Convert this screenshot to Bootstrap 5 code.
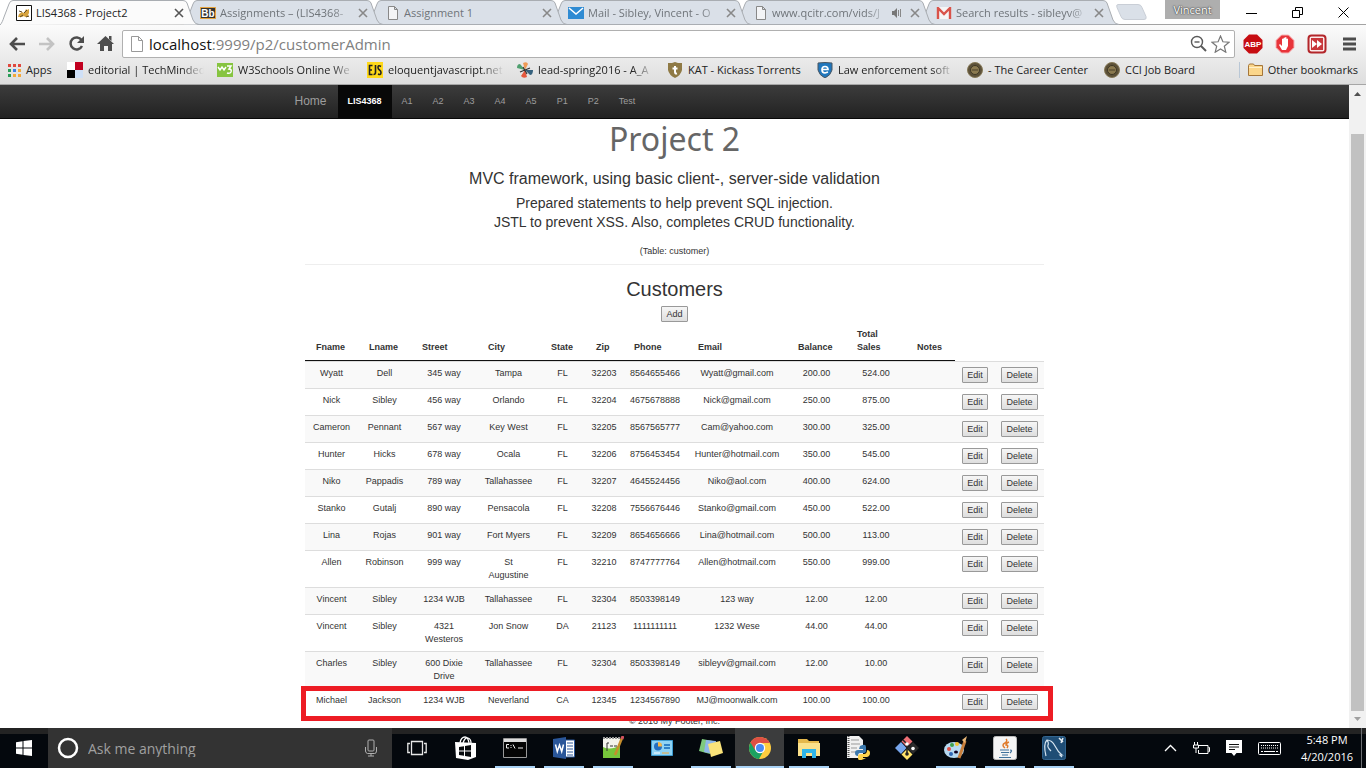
<!DOCTYPE html>
<html lang="en">
<head>
<meta charset="utf-8">
<meta name="viewport" content="width=device-width, initial-scale=1">
<title>LIS4368 - Project2</title>
<link href="https://cdn.jsdelivr.net/npm/bootstrap@5.3.0/dist/css/bootstrap.min.css" rel="stylesheet">
<style>
  body { font-family: "Open Sans", "Noto Sans", sans-serif; font-size: 11px; line-height: 16px; color: #333; background: #fff; overflow: hidden; }
  svg { display: block; flex: none; }
  button.bare { border: 0; background: none; padding: 0; color: inherit; }

  /* tab strip */
  .tabstrip { height: 25px; background: #fff; border-bottom: 1px solid #a3a3a3; }
  .tab-item { width: 184px; height: 24px; padding: 3px 0 0 16px; color: #6f7479; text-decoration: none; }
  .tab-item .shape { position: absolute; left: 0; top: 0; width: 199px; height: 25px; fill: #dae0e8; stroke: #a9adb2; }
  .tab-item.current { color: #222; }
  .tab-item.current .shape { fill: #fbfbfb; }
  .tab-body { gap: 4px; height: 20px; z-index: 1; }
  .tab-label { flex: 1; min-width: 0; }
  .fade-end { overflow: hidden; white-space: nowrap; }
  .fade-end.long { -webkit-mask-image: linear-gradient(90deg, #000 calc(100% - 22px), transparent); mask-image: linear-gradient(90deg, #000 calc(100% - 22px), transparent); }
  .user-tag { background: #aeaeae; color: #fff; width: 55px; height: 19px; text-shadow: 0 0 2px #333, 0 0 1px #333; }
  .win-buttons { width: 138px; color: #000; }

  /* toolbar and bookmarks */
  .toolbar-area { background: linear-gradient(#fbfbfb, #dedede); border-bottom: 1px solid #a6a6a6; height: 60px; }
  .toolrow { height: 34px; padding: 3px 10px 0 8px; }
  .address { border: 1px solid #b0b0b0; border-radius: 2px; background: #fff; height: 28px; padding: 0 4px 0 6px; }
  .address input { border: 0; outline: 0; background: none; font-size: 15px; color: transparent; padding: 0; position: absolute; inset: 0; width: 100%; }
  .address .url { font-size: 15px; line-height: 24px; color: #808080; }
  .address .url b { font-weight: 400; color: #111; }
  .bookmarks { height: 25px; gap: 13px; padding: 0 8px 3px; color: #222; }
  .bookmarks a { color: #222; text-decoration: none; gap: 5px; white-space: nowrap; }
  .bookmarks .fade-end { width: 116px; }
  .bookmarks .apps-label { width: 28px; }
  .bookmarks .career-label { width: 103px; }
  .other-marks { border-left: 1px solid #b9c7d6; padding-left: 8px; }

  /* the page itself */
  .page { font-family: "Liberation Sans", Arial, sans-serif; font-size: 9px; line-height: 13px; }
  .topnav { height: 34px; background: linear-gradient(#3c3c3c, #222); border-bottom: 1px solid #080808; }
  .topnav .inner { width: 760px; }
  .topnav a { color: #9d9d9d; text-decoration: none; padding: 0 10px; line-height: 33px; }
  .topnav a.home { font-size: 12px; padding: 0 11px 0 0; }
  .topnav a.on { background: #080808; color: #fff; font-weight: 700; }
  .sheet { width: 739px; }
  h1 { font-family: "Noto Sans", "Open Sans", sans-serif; font-size: 32px; line-height: 34px; font-weight: 400; color: #666; margin: 3px 0 14px; }
  h4 { font-size: 16px; line-height: 18px; font-weight: 400; margin: 0 0 6px; }
  .note { font-size: 14px; line-height: 19px; margin: 0 0 13px; }
  hr { margin: 6px 0 13px; border-top: 1px solid #eee; opacity: 1; }
  h3 { font-size: 20px; line-height: 22px; font-weight: 400; margin: 0 0 6px; }
  .btn-sys { border: 1px solid #999; border-radius: 1px; background: linear-gradient(#f6f6f6, #dedede); color: #333; font-size: 9px; line-height: 12px; height: 16px; padding: 1px 4px; display: block; margin: 0 auto; }
  .customers { width: 100%; table-layout: fixed; border-collapse: separate; border-spacing: 0; margin-top: 5px; }
  .customers th { padding: 1px 0 6px 11px; text-align: left; vertical-align: bottom; border-bottom: 1px solid #111; }
  .customers th.plain { border-color: transparent; }
  .customers td { padding: 5px; border-top: 1px solid #ddd; vertical-align: top; text-align: center; }
  .customers tbody tr:nth-child(odd) td { background: #f9f9f9; }
  .marker { position: absolute; left: -4px; right: -9px; bottom: -6px; height: 35px; border: 5px solid #ed1c24; z-index: 2; }

  .scroller { width: 17px; background: #f1f1f1; }
  .scroller .thumb { background: #c1c1c1; margin: 0 2px; }

  /* taskbar */
  .taskbar { height: 40px; background: linear-gradient(#232323 6px, #04080d 6px); color: #fff; }
  .start { width: 48px; }
  .search { width: 344px; background: #333; padding: 0 13px 0 9px; gap: 9px; }
  .search input { border: 0; outline: 0; background: none; flex: 1; min-width: 0; font-size: 14px; color: #a0a0a0; padding: 2px 0 0; }
  .search input::placeholder { color: #a0a0a0; opacity: 1; }
  .app { width: 49px; }
  .app.run { background: linear-gradient(#a9d2f5, #a9d2f5) center bottom / 40px 2px no-repeat; }
  .app.front { background: linear-gradient(#a9d2f5, #a9d2f5) center bottom / 48px 2px no-repeat, #3b3c3d; }
  .clock { line-height: 17px; width: 60px; }
  .peek { width: 5px; border-left: 1px solid #6b6e72; }
</style>
</head>
<body class="d-flex flex-column vh-100">

<header>
  <nav class="tabstrip d-flex" aria-label="Tabs">
    <a href="#" class="tab-item current position-relative" style="z-index:7">
      <svg class="shape" viewBox="0 0 199 25"><path d="M0 25C2 23 3 20 4 17L9 4Q10 .5 13 .5H183Q186 .5 187 3L193 20Q195 24.500 199 24.500" /></svg>
      <span class="tab-body d-flex align-items-center position-relative">
        <svg width="16" height="16" viewBox="0 0 16 16"><path d="M.5.500h15v15H.500z" fill="#fff" stroke="#111"/><path d="M2 12l1-3 3-2 2 1 2-4 1 1 2-1v4l-1 2 1 2H9l-1-1-2 1z" fill="#d6a23d"/><path d="M3 6l3 1M8 8l3-3M4 12l3-2M10 12l3-1" stroke="#5d4a26"/></svg>
        <span class="tab-label fade-end">LIS4368 - Project2</span>
        <svg width="10" height="10" viewBox="0 0 10 10" stroke="#555" stroke-width="1.600"><path d="M1 1l8 8M9 1l-8 8"/></svg>
      </span>
    </a>
    <a href="#" class="tab-item position-relative" style="z-index:6">
      <svg class="shape" viewBox="0 0 199 25"><path d="M0 24.500C2 23 3 20 4 17L9 4Q10 .5 13 .5H183Q186 .5 187 3L193 20Q195 24.500 199 24.500z" /></svg>
      <span class="tab-body d-flex align-items-center position-relative">
        <svg width="16" height="12" viewBox="0 0 16 12"><path d="M.5.500h15v11H.500z" fill="#333" stroke="#e5a23c"/><text x="8" y="9.500" font-size="10" font-weight="700" text-anchor="middle" fill="#fff" font-family="Liberation Sans">Bb</text></svg>
        <span class="tab-label fade-end long">Assignments – (LIS4368-</span>
        <svg width="10" height="10" viewBox="0 0 10 10" stroke="#888" stroke-width="1.600"><path d="M1 1l8 8M9 1l-8 8"/></svg>
      </span>
    </a>
    <a href="#" class="tab-item position-relative" style="z-index:5">
      <svg class="shape" viewBox="0 0 199 25"><path d="M0 24.500C2 23 3 20 4 17L9 4Q10 .5 13 .5H183Q186 .5 187 3L193 20Q195 24.500 199 24.500z" /></svg>
      <span class="tab-body d-flex align-items-center position-relative">
        <svg width="16" height="16" viewBox="0 0 16 16" fill="#f3f4f6" stroke="#888"><path d="M4.500 1.500h6l3 3v10h-9zM10.500 1.500v3h3"/></svg>
        <span class="tab-label fade-end">Assignment 1</span>
        <svg width="10" height="10" viewBox="0 0 10 10" stroke="#888" stroke-width="1.600"><path d="M1 1l8 8M9 1l-8 8"/></svg>
      </span>
    </a>
    <a href="#" class="tab-item position-relative" style="z-index:4">
      <svg class="shape" viewBox="0 0 199 25"><path d="M0 24.500C2 23 3 20 4 17L9 4Q10 .5 13 .5H183Q186 .5 187 3L193 20Q195 24.500 199 24.500z" /></svg>
      <span class="tab-body d-flex align-items-center position-relative">
        <svg width="16" height="12" viewBox="0 0 16 12"><path d="M0 0h16v12H0z" fill="#2f8bd3"/><path d="M1 1l7 6 7-6" fill="none" stroke="#fff" stroke-width="1.500"/></svg>
        <span class="tab-label fade-end long">Mail - Sibley, Vincent - O</span>
        <svg width="10" height="10" viewBox="0 0 10 10" stroke="#888" stroke-width="1.600"><path d="M1 1l8 8M9 1l-8 8"/></svg>
      </span>
    </a>
    <a href="#" class="tab-item position-relative" style="z-index:3">
      <svg class="shape" viewBox="0 0 199 25"><path d="M0 24.500C2 23 3 20 4 17L9 4Q10 .5 13 .5H183Q186 .5 187 3L193 20Q195 24.500 199 24.500z" /></svg>
      <span class="tab-body d-flex align-items-center position-relative">
        <svg width="16" height="16" viewBox="0 0 16 16" fill="#f3f4f6" stroke="#888"><path d="M4.500 1.500h6l3 3v10h-9zM10.500 1.500v3h3"/></svg>
        <span class="tab-label fade-end long">www.qcitr.com/vids/J</span>
        <svg width="10" height="10" viewBox="0 0 10 10" fill="#777"><path d="M0 3h2l3-3v10L2 7H0z"/><path d="M6.500 2v6M8.500 1v8" stroke="#888"/></svg>
        <svg width="10" height="10" viewBox="0 0 10 10" stroke="#888" stroke-width="1.600" class="ms-1"><path d="M1 1l8 8M9 1l-8 8"/></svg>
      </span>
    </a>
    <a href="#" class="tab-item position-relative" style="z-index:2">
      <svg class="shape" viewBox="0 0 199 25"><path d="M0 24.500C2 23 3 20 4 17L9 4Q10 .5 13 .5H183Q186 .5 187 3L193 20Q195 24.500 199 24.500z" /></svg>
      <span class="tab-body d-flex align-items-center position-relative">
        <svg width="16" height="12" viewBox="0 0 16 12"><path d="M1 0h14v12H1z" fill="#f5f5f5"/><path d="M2 12V1l6 6 6-6v11" fill="none" stroke="#d9534a" stroke-width="2.400"/></svg>
        <span class="tab-label fade-end long">Search results - sibleyv@</span>
        <svg width="10" height="10" viewBox="0 0 10 10" stroke="#888" stroke-width="1.600"><path d="M1 1l8 8M9 1l-8 8"/></svg>
      </span>
    </a>
    <button class="bare ms-2" aria-label="New tab"><svg width="42" height="20" viewBox="0 0 42 20"><path d="M6 2.500h20q3 0 4 3l4 9q1 3-2 3H13q-3 0-4-3L5 5.500q-1-3 1-3z" fill="#dae0e8" stroke="#c9ced6"/></svg></button>
    <div class="user-tag ms-auto me-2 d-flex align-items-center justify-content-center">Vincent</div>
    <div class="win-buttons d-flex align-items-center justify-content-around">
      <button class="bare" aria-label="Minimize"><svg width="11" height="11" viewBox="0 0 11 11" stroke="#000"><path d="M0 6.500h11"/></svg></button>
      <button class="bare" aria-label="Restore"><svg width="11" height="11" viewBox="0 0 11 11" stroke="#000" fill="none"><path d="M.5 3.500h7v7h-7zM3.500 3V.500h7v7H8"/></svg></button>
      <button class="bare" aria-label="Close"><svg width="11" height="11" viewBox="0 0 11 11" stroke="#000"><path d="M.5.500l10 10M10.500.500l-10 10"/></svg></button>
    </div>
  </nav>

  <div class="toolbar-area">
    <div class="toolrow d-flex align-items-center">
      <button class="bare" aria-label="Back"><svg width="18" height="16" viewBox="0 0 18 16" fill="none" stroke="#4d4d4d" stroke-width="2.600"><path d="M17 8H4M9 2L3 8l6 6"/></svg></button>
      <button class="bare ms-2 ps-1" aria-label="Forward"><svg width="18" height="16" viewBox="0 0 18 16" fill="none" stroke="#c3c3c3" stroke-width="2.600"><path d="M1 8h13M9 2l6 6-6 6"/></svg></button>
      <button class="bare ms-2 ps-1" aria-label="Reload"><svg width="17" height="17" viewBox="0 0 17 17"><path d="M13.500 5A6 6 0 1 0 14 11" fill="none" stroke="#4d4d4d" stroke-width="2.500"/><path d="M16 1v7H9z" fill="#4d4d4d"/></svg></button>
      <button class="bare ms-2 ps-1" aria-label="Home"><svg width="17" height="17" viewBox="0 0 17 17" fill="#4d4d4d"><path d="M8.500 1L17 9h-2v7h-4v-5H7v5H3V9H0zM12 1h2.500v5L12 4z"/></svg></button>
      <div class="address d-flex align-items-center flex-grow-1 ms-2">
        <svg width="16" height="16" viewBox="0 0 16 16" fill="#fff" stroke="#999"><path d="M2.500.500h7l4 4v11h-11zM9.500.500v4h4"/></svg>
        <label class="position-relative flex-grow-1 ms-1"><span class="url"><b>localhost</b>:9999/p2/customerAdmin</span><input type="text" aria-label="Address"></label>
        <svg width="17" height="17" viewBox="0 0 17 17" fill="none" stroke="#5a5a5a" stroke-width="1.400"><circle cx="7" cy="7" r="5.500"/><path d="M4.500 7h5"/><path d="M11 11l5 5" stroke-width="2"/></svg>
        <svg class="ms-1" width="19" height="18" viewBox="0 0 19 18" fill="#fff" stroke="#777" stroke-width="1.200"><path d="M9.500 1l2.400 5.800 6.100.4-4.700 4 1.500 6-5.300-3.300-5.300 3.300 1.500-6-4.700-4 6.100-.4z"/></svg>
      </div>
      <button class="bare ms-2" aria-label="ABP"><svg width="20" height="20" viewBox="0 0 20 20"><path d="M6 .5h8L19.500 6v8L14 19.500H6L.5 14V6z" fill="#c70d12"/><text x="10" y="13" font-size="8" font-weight="700" text-anchor="middle" fill="#fff" font-family="Liberation Sans">ABP</text></svg></button>
      <button class="bare ms-2 ps-1" aria-label="AdBlock"><svg width="20" height="20" viewBox="0 0 20 20"><path d="M6.500 1h7L19 6.500v7L13.500 19h-7L1 13.500v-7z" fill="#e8343a" stroke="#f6b4b6"/><path d="M7 16l-3-5 1-1 2 2V5q1-1 1.500 0V4q1-1 1.500 0v-.5q1-1 1.500 0V5q1-1 1.500 0v7l-2 4z" fill="#fff"/></svg></button>
      <button class="bare ms-2 ps-1" aria-label="Skip"><svg width="20" height="20" viewBox="0 0 20 20"><rect x="1.500" y="1.500" width="17" height="17" rx="3" fill="#fbeaea" stroke="#b3262a" stroke-width="2"/><rect x="4" y="4" width="12" height="12" fill="#c9373b"/><path d="M5 6l5 4-5 4zM10 6l5 4-5 4z" fill="#fff"/></svg></button>
      <button class="bare ms-3" aria-label="Menu"><svg width="13" height="14" viewBox="0 0 13 14" stroke="#4d4d4d" stroke-width="3"><path d="M0 2h13M0 7h13M0 12h13"/></svg></button>
    </div>

    <nav class="bookmarks d-flex align-items-center" aria-label="Bookmarks">
      <a href="#" class="d-flex align-items-center"><svg width="13" height="13" viewBox="0 0 13 13"><path d="M0 0h3v3H0zM5 0h3v3H5zM10 0h3v3h-3z" fill="#e0483e"/><path d="M0 5h3v3H0z" fill="#2a9d58"/><path d="M5 5h3v3H5z" fill="#3d7fe6"/><path d="M10 5h3v3h-3zM5 10h3v3H5zM10 10h3v3h-3z" fill="#f3a83b"/><path d="M0 10h3v3H0z" fill="#2a9d58"/></svg><span class="apps-label">Apps</span></a>
      <a href="#" class="d-flex align-items-center"><svg width="16" height="16" viewBox="0 0 16 16"><path d="M0 0h8v8H0z" fill="#fff"/><path d="M8 0h8v8H8z" fill="#c1001f"/><path d="M0 8h8v8H0z" fill="#000"/><path d="M8 8h8v8H8z" fill="#cfe0f7"/></svg><span class="fade-end long">editorial | TechMinded</span></a>
      <a href="#" class="d-flex align-items-center"><svg width="16" height="16" viewBox="0 0 16 16"><path d="M0 1h16v14H0z" fill="#86c440"/><path d="M1 5l2 3 2-3 2 3 2-3M10 4h4l-2 3q3 0 2 3-1 2-4 1" fill="none" stroke="#fff" stroke-width="1.500"/></svg><span class="fade-end long">W3Schools Online We</span></a>
      <a href="#" class="d-flex align-items-center"><svg width="16" height="16" viewBox="0 0 16 16"><path d="M0 0h16v16H0z" fill="#ffd91a"/><path d="M5.500 3.500h-3v9h3M2.500 8h2.500M8.500 3v7.500q0 2-2 2M14 4.500q-3-2-3 1 0 1.500 1.500 2.500 1.500 1 1.500 2.500 0 3-3 1.500" fill="none" stroke="#222" stroke-width="1.600"/></svg><span class="fade-end long">eloquentjavascript.net</span></a>
      <a href="#" class="d-flex align-items-center"><svg width="16" height="16" viewBox="0 0 16 16"><path d="M8 8L6 1q4-2 5 1z" fill="#ef9a55"/><path d="M8 8L0 6q0-4 3-4z" fill="#4fa06f"/><path d="M8 8l8 0q0 5-3 5z" fill="#35617d"/><path d="M8 8l2 7q-4 2-6-1z" fill="#e4573d"/><path d="M3 10l10-4M6 5l4 7" stroke="#333" stroke-width="1.200"/></svg><span class="fade-end long">lead-spring2016 - A_A</span></a>
      <a href="#" class="d-flex align-items-center"><svg width="16" height="16" viewBox="0 0 16 16"><path d="M8 0l3 1 4 0v7q-1 5-7 8-6-3-7-8V1h4z" fill="#8f7a45"/><path d="M8 4v6q0 2 2 1.500M5.500 6.500h5" fill="none" stroke="#fff" stroke-width="2"/></svg><span class="fade-end">KAT - Kickass Torrents</span></a>
      <a href="#" class="d-flex align-items-center"><svg width="16" height="16" viewBox="0 0 16 16"><path d="M1 1q7-1 14 0v7q-1 5-7 8-6-3-7-8z" fill="#2077bd" stroke="#4a5661"/><path d="M5 7.500h6q0-3-3-3t-3 3q0 3.500 3 3.500l3-1" fill="none" stroke="#fff" stroke-width="1.700"/></svg><span class="fade-end long">Law enforcement soft</span></a>
      <a href="#" class="d-flex align-items-center"><svg width="16" height="16" viewBox="0 0 16 16"><circle cx="8" cy="8" r="7.500" fill="#5c5139" stroke="#877a58"/><circle cx="8" cy="8" r="4.500" fill="#8b7a50" stroke="#3f3825"/><path d="M5 8h6" stroke="#4a412a"/></svg><span class="career-label">- The Career Center</span></a>
      <a href="#" class="d-flex align-items-center"><svg width="16" height="16" viewBox="0 0 16 16"><circle cx="8" cy="8" r="7.500" fill="#5c5139" stroke="#877a58"/><circle cx="8" cy="8" r="4.500" fill="#8b7a50" stroke="#3f3825"/><path d="M5 8h6" stroke="#4a412a"/></svg><span>CCI Job Board</span></a>
      <a href="#" class="other-marks d-flex align-items-center ms-auto"><svg width="15" height="14" viewBox="0 0 15 14"><path d="M.5 2.500l1-1.500h4l1 1.500h8v10H.500z" fill="#fbd68b" stroke="#a5763a"/><path d="M1 4.500h13" stroke="#fff0c9"/></svg><span>Other bookmarks</span></a>
    </nav>
  </div>
</header>

<div class="d-flex flex-grow-1 overflow-hidden">
  <main class="page flex-grow-1 overflow-hidden">
    <nav class="topnav">
      <div class="inner mx-auto d-flex">
        <a href="#" class="home">Home</a>
        <a href="#" class="on">LIS4368</a>
        <a href="#">A1</a><a href="#">A2</a><a href="#">A3</a><a href="#">A4</a><a href="#">A5</a>
        <a href="#">P1</a><a href="#">P2</a><a href="#">Test</a>
      </div>
    </nav>

    <div class="sheet mx-auto text-center">
      <h1>Project 2</h1>
      <h4>MVC framework, using basic client-, server-side validation</h4>
      <p class="note">Prepared statements to help prevent SQL injection.<br>JSTL to prevent XSS. Also, completes CRUD functionality.</p>
      <div>(Table: customer)</div>
      <hr>
      <h3>Customers</h3>
      <button class="btn-sys">Add</button>

      <div class="position-relative">
        <table class="customers">
          <colgroup>
            <col style="width:53px"><col style="width:53px"><col style="width:66px"><col style="width:63px"><col style="width:45px"><col style="width:38px"><col style="width:64px"><col style="width:100px"><col style="width:59px"><col style="width:60px"><col style="width:49px"><col style="width:40px"><col style="width:49px">
          </colgroup>
          <thead>
            <tr><th>Fname</th><th>Lname</th><th>Street</th><th>City</th><th>State</th><th>Zip</th><th>Phone</th><th>Email</th><th>Balance</th><th>Total<br>Sales</th><th>Notes</th><th class="plain"></th><th class="plain"></th></tr>
          </thead>
          <tbody>
            <tr><td>Wyatt</td><td>Dell</td><td>345 way</td><td>Tampa</td><td>FL</td><td>32203</td><td>8564655466</td><td>Wyatt@gmail.com</td><td>200.00</td><td>524.00</td><td></td><td><button class="btn-sys">Edit</button></td><td><button class="btn-sys">Delete</button></td></tr>
            <tr><td>Nick</td><td>Sibley</td><td>456 way</td><td>Orlando</td><td>FL</td><td>32204</td><td>4675678888</td><td>Nick@gmail.com</td><td>250.00</td><td>875.00</td><td></td><td><button class="btn-sys">Edit</button></td><td><button class="btn-sys">Delete</button></td></tr>
            <tr><td>Cameron</td><td>Pennant</td><td>567 way</td><td>Key West</td><td>FL</td><td>32205</td><td>8567565777</td><td>Cam@yahoo.com</td><td>300.00</td><td>325.00</td><td></td><td><button class="btn-sys">Edit</button></td><td><button class="btn-sys">Delete</button></td></tr>
            <tr><td>Hunter</td><td>Hicks</td><td>678 way</td><td>Ocala</td><td>FL</td><td>32206</td><td>8756453454</td><td>Hunter@hotmail.com</td><td>350.00</td><td>545.00</td><td></td><td><button class="btn-sys">Edit</button></td><td><button class="btn-sys">Delete</button></td></tr>
            <tr><td>Niko</td><td>Pappadis</td><td>789 way</td><td>Tallahassee</td><td>FL</td><td>32207</td><td>4645524456</td><td>Niko@aol.com</td><td>400.00</td><td>624.00</td><td></td><td><button class="btn-sys">Edit</button></td><td><button class="btn-sys">Delete</button></td></tr>
            <tr><td>Stanko</td><td>Gutalj</td><td>890 way</td><td>Pensacola</td><td>FL</td><td>32208</td><td>7556676446</td><td>Stanko@gmail.com</td><td>450.00</td><td>522.00</td><td></td><td><button class="btn-sys">Edit</button></td><td><button class="btn-sys">Delete</button></td></tr>
            <tr><td>Lina</td><td>Rojas</td><td>901 way</td><td>Fort Myers</td><td>FL</td><td>32209</td><td>8654656666</td><td>Lina@hotmail.com</td><td>500.00</td><td>113.00</td><td></td><td><button class="btn-sys">Edit</button></td><td><button class="btn-sys">Delete</button></td></tr>
            <tr><td>Allen</td><td>Robinson</td><td>999 way</td><td>St<br>Augustine</td><td>FL</td><td>32210</td><td>8747777764</td><td>Allen@hotmail.com</td><td>550.00</td><td>999.00</td><td></td><td><button class="btn-sys">Edit</button></td><td><button class="btn-sys">Delete</button></td></tr>
            <tr><td>Vincent</td><td>Sibley</td><td>1234 WJB</td><td>Tallahassee</td><td>FL</td><td>32304</td><td>8503398149</td><td>123 way</td><td>12.00</td><td>12.00</td><td></td><td><button class="btn-sys">Edit</button></td><td><button class="btn-sys">Delete</button></td></tr>
            <tr><td>Vincent</td><td>Sibley</td><td>4321<br>Westeros</td><td>Jon Snow</td><td>DA</td><td>21123</td><td>1111111111</td><td>1232 Wese</td><td>44.00</td><td>44.00</td><td></td><td><button class="btn-sys">Edit</button></td><td><button class="btn-sys">Delete</button></td></tr>
            <tr><td>Charles</td><td>Sibley</td><td>600 Dixie<br>Drive</td><td>Tallahassee</td><td>FL</td><td>32304</td><td>8503398149</td><td>sibleyv@gmail.com</td><td>12.00</td><td>10.00</td><td></td><td><button class="btn-sys">Edit</button></td><td><button class="btn-sys">Delete</button></td></tr>
            <tr><td>Michael</td><td>Jackson</td><td>1234 WJB</td><td>Neverland</td><td>CA</td><td>12345</td><td>1234567890</td><td>MJ@moonwalk.com</td><td>100.00</td><td>100.00</td><td></td><td><button class="btn-sys">Edit</button></td><td><button class="btn-sys">Delete</button></td></tr>
          </tbody>
        </table>
        <div class="marker"></div>
      </div>
      <footer>© 2016 My Footer, Inc.</footer>
    </div>
  </main>

  <div class="scroller d-flex flex-column" aria-hidden="true">
    <svg width="17" height="49" viewBox="0 0 17 49"><path d="M5 11h7L8.500 7z" fill="#505050"/></svg>
    <div class="thumb flex-grow-1"></div>
    <svg width="17" height="17" viewBox="0 0 17 17"><path d="M5 6h7l-3.500 4z" fill="#a0a0a0"/></svg>
  </div>
</div>

<footer class="taskbar d-flex">
  <button class="bare start d-flex align-items-center justify-content-center" aria-label="Start"><svg width="16" height="16" viewBox="0 0 16 16" fill="#fff"><path d="M0 2.200L6.500 1.300V7.500H0zM7.500 1.100L16 0v7.500H7.500zM0 8.500h6.500v6.200L0 13.800zM7.500 8.500H16V16l-8.500-1.100z"/></svg></button>
  <label class="search d-flex align-items-center">
    <svg width="22" height="22" viewBox="0 0 22 22"><circle cx="11" cy="11" r="9" fill="none" stroke="#fff" stroke-width="2.500"/></svg>
    <input type="text" placeholder="Ask me anything" aria-label="Search">
    <svg width="16" height="18" viewBox="0 0 16 18" fill="none" stroke="#b0b0b0"><rect x="5" y="1" width="6" height="11" rx="1"/><path d="M2.500 8v4q0 2 2 2.500h7q2 0 2-2.500V8M8 14.500V17M5 17h6"/></svg>
  </label>
  <div class="d-flex">
    <button class="bare app d-flex align-items-center justify-content-center" aria-label="Task view"><svg width="20" height="16" viewBox="0 0 20 16" fill="none" stroke="#e6e6e6" stroke-width="1.300"><path d="M4.500 1.500h11v13h-11zM3 3.500H.800v9H3M17 3.500h2.200v9H17"/></svg></button>
    <button class="bare app d-flex align-items-center justify-content-center" aria-label="Store"><svg width="22" height="24" viewBox="0 0 22 24"><path d="M5 7q1-6 5-6 3 0 4 6M8 7q2-6 5-5 3 1 3 5" fill="none" stroke="#fff" stroke-width="1.300"/><path d="M0 6l21 1v14l-8 3L1 22z" fill="#fff"/><path d="M4 11l5-.7v4.200H4zM10 10l6-1v5.500h-6zM4 15.500h5v4.200L4 19zM10 15.500h6V21l-6-1z" fill="#080b0e"/></svg></button>
    <button class="bare app run d-flex align-items-center justify-content-center" aria-label="Command prompt"><svg width="24" height="20" viewBox="0 0 24 20"><path d="M.5.500h23v19H.500z" fill="#050505" stroke="#999"/><path d="M1 1h22v3H1z" fill="#ddd"/><path d="M6 6.500H3.500v3.500H6M8 7v1M8 9v1M10 6.500l2 4M15 10h5" fill="none" stroke="#eee"/></svg></button>
    <button class="bare app run d-flex align-items-center justify-content-center" aria-label="Word"><svg width="22" height="22" viewBox="0 0 22 22"><path d="M12 3h9.500v17H12z" fill="#fff" stroke="#2a5699"/><path d="M14 6h6M14 9h6M14 12h6M14 15h6M14 18h6" stroke="#2a5699"/><path d="M0 2l13-2v22L0 20z" fill="#2a5699"/><path d="M2.500 7.500l1.800 7L6.500 8l2.200 6.500 1.800-7" fill="none" stroke="#fff" stroke-width="1.500"/></svg></button>
    <button class="bare app run d-flex align-items-center justify-content-center" aria-label="Notepad++"><svg width="22" height="24" viewBox="0 0 22 24"><path d="M1 2h17v20H1z" fill="#f4f4ec"/><path d="M1 11q8 4 17-2v13H1z" fill="#76c63b"/><path d="M1 2h17" stroke="#999" stroke-width="2" stroke-dasharray="2 1"/><path d="M5 7v8M5 7h2M8 10h3M12 10h3" stroke="#333"/><path d="M20 2l-7 17" stroke="#c68e2c" stroke-width="2.500"/><path d="M21 0l-1 3" stroke="#d0525f" stroke-width="3"/></svg></button>
    <button class="bare app d-flex align-items-center justify-content-center" aria-label="Control panel"><svg width="22" height="16" viewBox="0 0 22 16"><path d="M.5.500h21v15H.500z" fill="#8fd3f5" stroke="#3c9bd0"/><circle cx="7" cy="6.500" r="4" fill="#246fc0"/><path d="M7 6.500V2a4 4 0 0 1 4 4.500z" fill="#f7b748"/><path d="M13 5h6M13 8h6" stroke="#2f81c7" stroke-width="2"/><path d="M3 13h6" stroke="#fff"/><path d="M11 13h7" stroke="#f2a83a"/></svg></button>
    <button class="bare app run d-flex align-items-center justify-content-center" aria-label="Sticky notes"><svg width="24" height="20" viewBox="0 0 24 20"><path d="M3 1l11 2-3 13-11-3z" fill="#7fca7d"/><path d="M7 2l10 1-2 13-10-2z" fill="#8fb7ea"/><path d="M9 6l12-3 3 12-12 4z" fill="#fae37a"/></svg></button>
    <button class="bare app front d-flex align-items-center justify-content-center" aria-label="Chrome"><svg width="22" height="22" viewBox="0 0 22 22"><circle cx="11" cy="11" r="11" fill="#ffcd40"/><path d="M11 11L1.500 5.500A11 11 0 0 0 10 22l5-9z" fill="#1ba261"/><path d="M11 6h9.800A11 11 0 0 0 1.500 5.500L6 13z" fill="#de5044"/><circle cx="11" cy="11" r="5.200" fill="#fff"/><circle cx="11" cy="11" r="4" fill="#4a8bf5"/></svg></button>
    <button class="bare app run d-flex align-items-center justify-content-center" aria-label="Explorer"><svg width="22" height="20" viewBox="0 0 22 20"><path d="M0 1h9l2 2h10v5H0z" fill="#e5b84c"/><path d="M0 5h22v13H0z" fill="#fbe18b"/><path d="M4 20v-9h14v9h-4v-5H8v5z" fill="#2fb5e9"/></svg></button>
    <button class="bare app d-flex align-items-center justify-content-center" aria-label="IDLE"><svg width="24" height="24" viewBox="0 0 24 24"><path d="M1 0h12l4 4v18H1z" fill="#f0f0f0"/><path d="M2.500 0v22" stroke="#555" stroke-width="2" stroke-dasharray="1 1"/><path d="M5 4h8M5 8h9M5 12h6M5 16h5" stroke="#999"/><path d="M14 10q6-3 6 1v4q0 2-3 2h-3q-2 0-2 3-3 0-3-3t3-3h5v-1h-4z" fill="#3b78ad"/><path d="M18 23q-6 3-6-1v-2q0-2 3-2h3q3 0 3-4 3 0 3 3t-3 4h-4v1h3z" fill="#ffd54f"/></svg></button>
    <button class="bare app d-flex align-items-center justify-content-center" aria-label="Git"><svg width="24" height="24" viewBox="0 0 24 24"><path d="M12 0l5.500 5.500L12 11 6.500 5.500z" fill="#ee6f75"/><path d="M6 6l5.500 6L6 18l-6-6z" fill="#76a5ec"/><path d="M18 6l6 6-6 6-6-6z" fill="#2b2b2b"/><path d="M12 13l5.500 5.500L12 24l-5.500-5.500z" fill="#ffe36b"/><path d="M8 4l4 4v11M12 8l6 5" stroke="#222" stroke-width="1.500" fill="none"/><circle cx="12" cy="8" r="1.800" fill="#fff"/><circle cx="18" cy="12.500" r="1.800" fill="#fff"/><circle cx="12" cy="18" r="1.800" fill="#222"/></svg></button>
    <button class="bare app run d-flex align-items-center justify-content-center" aria-label="Paint"><svg width="24" height="24" viewBox="0 0 24 24"><ellipse cx="10" cy="14" rx="10" ry="8" fill="#b7d9f1"/><circle cx="5" cy="13" r="2" fill="#e04f45"/><circle cx="8" cy="9" r="2" fill="#3fa14c"/><circle cx="13" cy="8" r="2" fill="#f2c033"/><circle cx="7" cy="18" r="2" fill="#2e67b5"/><ellipse cx="12" cy="16" rx="2" ry="1.500" fill="#102"/><path d="M21 5l-6 17" stroke="#c87f3c" stroke-width="3"/><path d="M23 0l-5 4 3 3z" fill="#e8b778"/></svg></button>
    <button class="bare app run d-flex align-items-center justify-content-center" aria-label="Java"><svg width="24" height="24" viewBox="0 0 24 24"><rect x=".5" y=".5" width="23" height="23" rx="2" fill="#f4f4f4" stroke="#bbb"/><path d="M12 12q-4-3 0-5 3-2 1-4M14 12q2-3-1-3 0-2 3-3" fill="none" stroke="#e07b2c" stroke-width="1.500"/><path d="M7 14h9M8 16.500h8M9 19h6M6 21.500h12M17 14q3 0 0 3" fill="none" stroke="#40729c" stroke-width="1.200"/></svg></button>
    <button class="bare app run d-flex align-items-center justify-content-center" aria-label="MySQL Workbench"><svg width="24" height="24" viewBox="0 0 24 24"><rect x=".5" y=".5" width="23" height="23" rx="2" fill="#1f4d75" stroke="#32648e"/><path d="M4 20Q1 8 5 4q5 0 8 6t7 9l-2 0 2 2M5 4q2 3 1 5t3 6" fill="none" stroke="#d7e5f0" stroke-width="1.200"/><path d="M17 2l4 4M21 2l-2 5" stroke="#e8eef4" stroke-width="1.500"/></svg></button>
  </div>
  <div class="ms-auto d-flex">
    <div class="d-flex align-items-center gap-3 me-1">
      <svg width="13" height="8" viewBox="0 0 13 8" fill="none" stroke="#fff" stroke-width="1.300"><path d="M1 7l5.500-5.500L12 7"/></svg>
      <svg width="17" height="13" viewBox="0 0 17 13" fill="none" stroke="#fff"><path d="M6 3.500h9v8H5.500V8M15.500 5.500h1v4h-1M1.500 0v3M4.500 0v3M.5 3h5v3h-5zM3 6v5"/></svg>
      <svg width="16" height="16" viewBox="0 0 16 16"><path d="M0 0h16v13h-5.500L8 16l-2.500-3H0z" fill="#fff"/><path d="M3 4.500h10M3 7h10M3 9.500h6" stroke="#111"/></svg>
      <svg width="23" height="13" viewBox="0 0 23 13" fill="none" stroke="#fff"><rect x=".5" y=".5" width="22" height="12" rx="1"/><path d="M3 3.500h17M3 6h17" stroke-dasharray="1 1"/><path d="M3 9.500h2M6 9.500h11M18 9.500h2"/></svg>
      <div class="clock text-center">5:48 PM<br>4/20/2016</div>
    </div>
    <div class="peek"></div>
  </div>
</footer>

<script src="https://cdn.jsdelivr.net/npm/bootstrap@5.3.0/dist/js/bootstrap.bundle.min.js"></script>
</body>
</html>
